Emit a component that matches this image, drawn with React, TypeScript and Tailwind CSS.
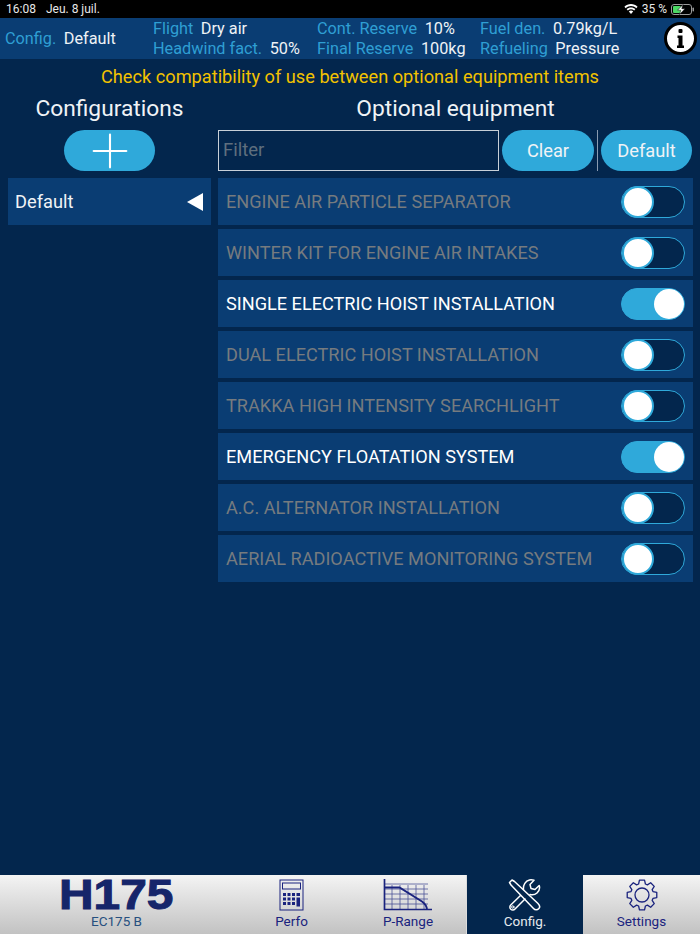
import { Plus } from 'lucide-react';

const equipment = [
  { name: 'ENGINE AIR PARTICLE SEPARATOR', on: false },
  { name: 'WINTER KIT FOR ENGINE AIR INTAKES', on: false },
  { name: 'SINGLE ELECTRIC HOIST INSTALLATION', on: true },
  { name: 'DUAL ELECTRIC HOIST INSTALLATION', on: false },
  { name: 'TRAKKA HIGH INTENSITY SEARCHLIGHT', on: false },
  { name: 'EMERGENCY FLOATATION SYSTEM', on: true },
  { name: 'A.C. ALTERNATOR INSTALLATION', on: false },
  { name: 'AERIAL RADIOACTIVE MONITORING SYSTEM', on: false },
];

const Toggle = ({ on }: { on: boolean }) =>
  on ? (
    <div className="flex h-8 w-16 items-center justify-end rounded-full border border-[#2fa9da] bg-[#2fa9da]">
      <div className="h-[30px] w-[30px] rounded-full bg-white" />
    </div>
  ) : (
    <div className="flex h-8 w-16 items-center rounded-full border border-[#2fa9da] bg-[#03264d]">
      <div className="h-8 w-8 rounded-full border-2 border-[#2fa9da] bg-white" />
    </div>
  );

const Info = ({ label, value }: { label: string; value: string }) => (
  <div className="flex h-5 items-center gap-[7.5px] whitespace-nowrap">
    <span className="text-[#2f9fd3]">{label}</span>
    <span className="text-[#eef2f6]">{value}</span>
  </div>
);

const CalcIcon = () => (
  <svg width="26" height="32" viewBox="0 0 26 32" fill="none" stroke="#1a237e">
    <rect x="1" y="1" width="23" height="30" strokeWidth="1" />
    <rect x="3.5" y="4" width="18" height="6" strokeWidth="1" />
    <g fill="#1a237e" stroke="none">
      <rect x="4" y="14" width="3" height="3" />
      <rect x="8.5" y="14" width="3" height="3" />
      <rect x="13" y="14" width="3" height="3" />
      <rect x="17.5" y="14" width="3.5" height="3" />
      <rect x="4" y="18.5" width="3" height="3" />
      <rect x="8.5" y="18.5" width="3" height="3" />
      <rect x="13" y="18.5" width="3" height="3" />
      <rect x="17.5" y="18.5" width="3.5" height="9" />
      <rect x="4" y="23" width="3" height="3" />
      <rect x="8.5" y="23" width="3" height="3" />
      <rect x="13" y="23" width="3" height="3" />
    </g>
  </svg>
);

const RangeIcon = () => (
  <svg width="50" height="32" viewBox="0 0 50 32" fill="none" stroke="#1a237e">
    <g strokeWidth="0.8" opacity="0.75">
      <path d="M1 5H45M1 10H45M1 15H45M1 20H45M1 25H45" />
      <path d="M9 6V30M17 6V30M25 6V30M33 6V30M41 6V30" />
    </g>
    <path d="M1.500 0V30.500H49" strokeWidth="1.700" />
    <path d="M2 8.500H16.500L39 22.500C42 24.500 43.500 27 44 30" strokeWidth="2" />
  </svg>
);

const ToolsIcon = () => (
  <svg width="34" height="32" viewBox="0 0 34 32" fill="none" stroke="#fff" strokeWidth="1.500" strokeLinejoin="round" strokeLinecap="round">
    <path d="M1.500 3.500L4 1L6.500 2.500L30 24.500C32 26.500 32 28.500 30.700 29.800C29.300 31.200 27 31.200 25.500 29.500L3 6Z" />
    <path d="M15.500 10.500C15 6 17.500 2 21.500 1C23 0.600 24.500 0.800 26 1.300L22 5.500L23 9.500L27 10.500L31.200 6.500C32 9 31.200 12 29 14C27 15.800 24.500 16.200 22 15.500" />
    <path d="M12.500 16.500L3 25.800C1.500 27.300 1.500 29 2.800 30.200C4 31.400 5.800 31.300 7 30L17 20" />
    <circle cx="4.800" cy="28" r="1.200" strokeWidth="1" />
  </svg>
);

const gearPath = () => {
  const points: string[] = [];
  for (let i = 0; i < 8; i++) {
    const a = (i * Math.PI) / 4 - Math.PI / 2;
    const at = (r: number, d: number) => `${(16 + r * Math.cos(a + d)).toFixed(2)} ${(16 + r * Math.sin(a + d)).toFixed(2)}`;
    points.push(at(11.5, -0.3), at(15, -0.17), at(15, 0.17), at(11.5, 0.3));
  }
  return `M${points.join('L')}Z`;
};

const GearIcon = () => (
  <svg width="32" height="32" viewBox="0 0 32 32" fill="none" stroke="#1a237e" strokeWidth="1.300" strokeLinejoin="round">
    <path d={gearPath()} />
    <circle cx="16" cy="16" r="7" />
  </svg>
);

const Tab = ({ label, icon, className }: { label: string; icon: React.ReactNode; className: string }) => (
  <div className={`flex h-full flex-col items-center ${className}`}>
    <div className="mt-[4px] flex h-8 items-center">{icon}</div>
    <span className="mt-[2px] text-[13.500px] leading-4">{label}</span>
  </div>
);

const tabBg = 'bg-gradient-to-b from-[#f4f4f4] to-[#c2c2c2] text-[#1a237e]';

export default function App() {
  return (
    <div className="flex h-[934px] w-[700px] flex-col overflow-hidden bg-[#03264d] font-['Roboto',sans-serif]">
      <div className="flex h-[18px] items-center justify-between bg-black pl-[6px] pr-[6px] text-[12px] text-[#e8e8e8]">
        <div className="flex gap-[10px]">
          <span>16:08</span>
          <span>Jeu. 8 juil.</span>
        </div>
        <div className="flex items-center gap-[3px]">
          <svg width="14" height="10" viewBox="0 0 14 10" fill="#fff">
            <path d="M7 10L4.800 7.500C6 6.300 8 6.300 9.200 7.500Z" />
            <path d="M3.800 6.500L2.600 5.100C5 2.800 9 2.800 11.400 5.100L10.200 6.500C8.400 4.800 5.600 4.800 3.800 6.500Z" />
            <path d="M1.700 4.200L0.400 2.800C4 -0.800 10 -0.800 13.600 2.800L12.300 4.200C9.400 1.300 4.600 1.300 1.700 4.200Z" />
          </svg>
          <span className="ml-[1px]">35 %</span>
          <svg width="23" height="11" viewBox="0 0 23 11" className="ml-[1px]">
            <rect x="0.500" y="0.500" width="20" height="10" rx="2.500" fill="none" stroke="#9a9a9a" />
            <rect x="2" y="2" width="8" height="7" rx="1" fill="#4cd964" />
            <rect x="21.500" y="3.500" width="1.500" height="4" rx="0.700" fill="#9a9a9a" />
            <path d="M12 0.500L6.500 6.200H9.800L8.500 10.500L14 4.700H10.800Z" fill="#fff" stroke="#000" strokeWidth="0.500" />
          </svg>
        </div>
      </div>

      <div className="flex h-[41px] items-center bg-[#0a3d73] text-[16.250px]">
        <div className="flex w-[153px] gap-[7.5px] pl-[5px] pt-px">
          <span className="text-[#2f9fd3]">Config.</span>
          <span className="text-[#eef2f6]">Default</span>
        </div>
        <div className="w-[164px] pt-px">
          <Info label="Flight" value="Dry air" />
          <Info label="Headwind fact." value="50%" />
        </div>
        <div className="w-[163px] pt-px">
          <Info label="Cont. Reserve" value="10%" />
          <Info label="Final Reserve" value="100kg" />
        </div>
        <div className="w-[184px] pt-px">
          <Info label="Fuel den." value="0.79kg/L" />
          <Info label="Refueling" value="Pressure" />
        </div>
        <div className="flex h-[33px] w-[33px] items-center justify-center rounded-full border-[3px] border-black bg-white">
          <svg width="7" height="19" viewBox="0 0 7 19" fill="#000">
            <rect x="1.500" y="0" width="4" height="4" rx="1" />
            <path d="M0.500 6.500H5.500V16.500H7V19H0V16.500H1.500V9H0.500Z" />
          </svg>
        </div>
      </div>

      <p className="mt-2 h-5 text-center text-[18.200px] leading-5 text-[#f2c200]">
        Check compatibility of use between optional equipment items
      </p>

      <div className="mt-[9px] flex flex-1 gap-[7px] pl-2 pr-[7px]">
        <div className="w-[203px]">
          <h2 className="text-center text-[22.750px] leading-[26px] text-[#f0f3f6]">Configurations</h2>
          <div className="mt-[8px] flex justify-center">
            <div className="flex h-[41px] w-[91px] items-center justify-center rounded-full bg-[#2fa9da]">
              <Plus size={56} strokeWidth={0.900} className="shrink-0 text-white" />
            </div>
          </div>
          <div className="mt-[7px] flex h-[47px] items-center justify-between bg-[#0a3d73] pl-[7px] pr-2 text-[18.250px] text-[#f0f3f6]">
            <span>Default</span>
            <svg width="16" height="18" viewBox="0 0 16 18" fill="#fff">
              <path d="M16 0V18L0 9Z" />
            </svg>
          </div>
        </div>

        <div className="flex-1">
          <h2 className="text-center text-[22.750px] leading-[26px] text-[#f0f3f6]">Optional equipment</h2>
          <div className="mt-[8px] flex h-[41px] items-center">
            <div className="flex h-full w-[281px] items-center border border-[#c8d0d8] pl-1 text-[18.500px] text-[#5f6f7e]">Filter</div>
            <div className="ml-[3px] flex h-full w-[92px] items-center justify-center rounded-full bg-[#2fa9da] text-[18.250px] text-[#f0f3f6]">Clear</div>
            <div className="ml-[3px] h-full w-px bg-[#8a9bb0]" />
            <div className="ml-[3px] flex h-full w-[91px] items-center justify-center rounded-full bg-[#2fa9da] text-[18.250px] text-[#f0f3f6]">Default</div>
          </div>
          <div className="mt-[7px] flex flex-col gap-1">
            {equipment.map((item) => (
              <div key={item.name} className="flex h-[47px] items-center justify-between bg-[#0a3d73] pl-2 pr-2">
                <span className={item.on ? 'text-[18.150px] text-white' : 'text-[18.150px] text-[#767b7f]'}>{item.name}</span>
                <Toggle on={item.on} />
              </div>
            ))}
          </div>
        </div>
      </div>

      <div className="flex h-[59px]">
        <div className={`flex w-[233px] flex-col items-center ${tabBg}`}>
          <div className="mt-[4px] h-[31px] font-['Liberation_Sans',sans-serif] text-[42px] leading-[31px] font-bold text-[#16256a] [-webkit-text-stroke:1px_#16256a] [transform:scaleX(1.140)]">H175</div>
          <span className="mt-[3px] text-[13.500px] leading-4 text-[#27507f]">EC175 B</span>
        </div>
        <Tab label="Perfo" icon={<CalcIcon />} className={`w-[117px] ${tabBg}`} />
        <Tab label="P-Range" icon={<RangeIcon />} className={`w-[116px] ${tabBg}`} />
        <Tab label="Config." icon={<ToolsIcon />} className="w-[117px] border-l border-[#dcdcdc] bg-[#03264d] text-[#e6eaee]" />
        <Tab label="Settings" icon={<GearIcon />} className={`flex-1 ${tabBg}`} />
      </div>
    </div>
  );
}
